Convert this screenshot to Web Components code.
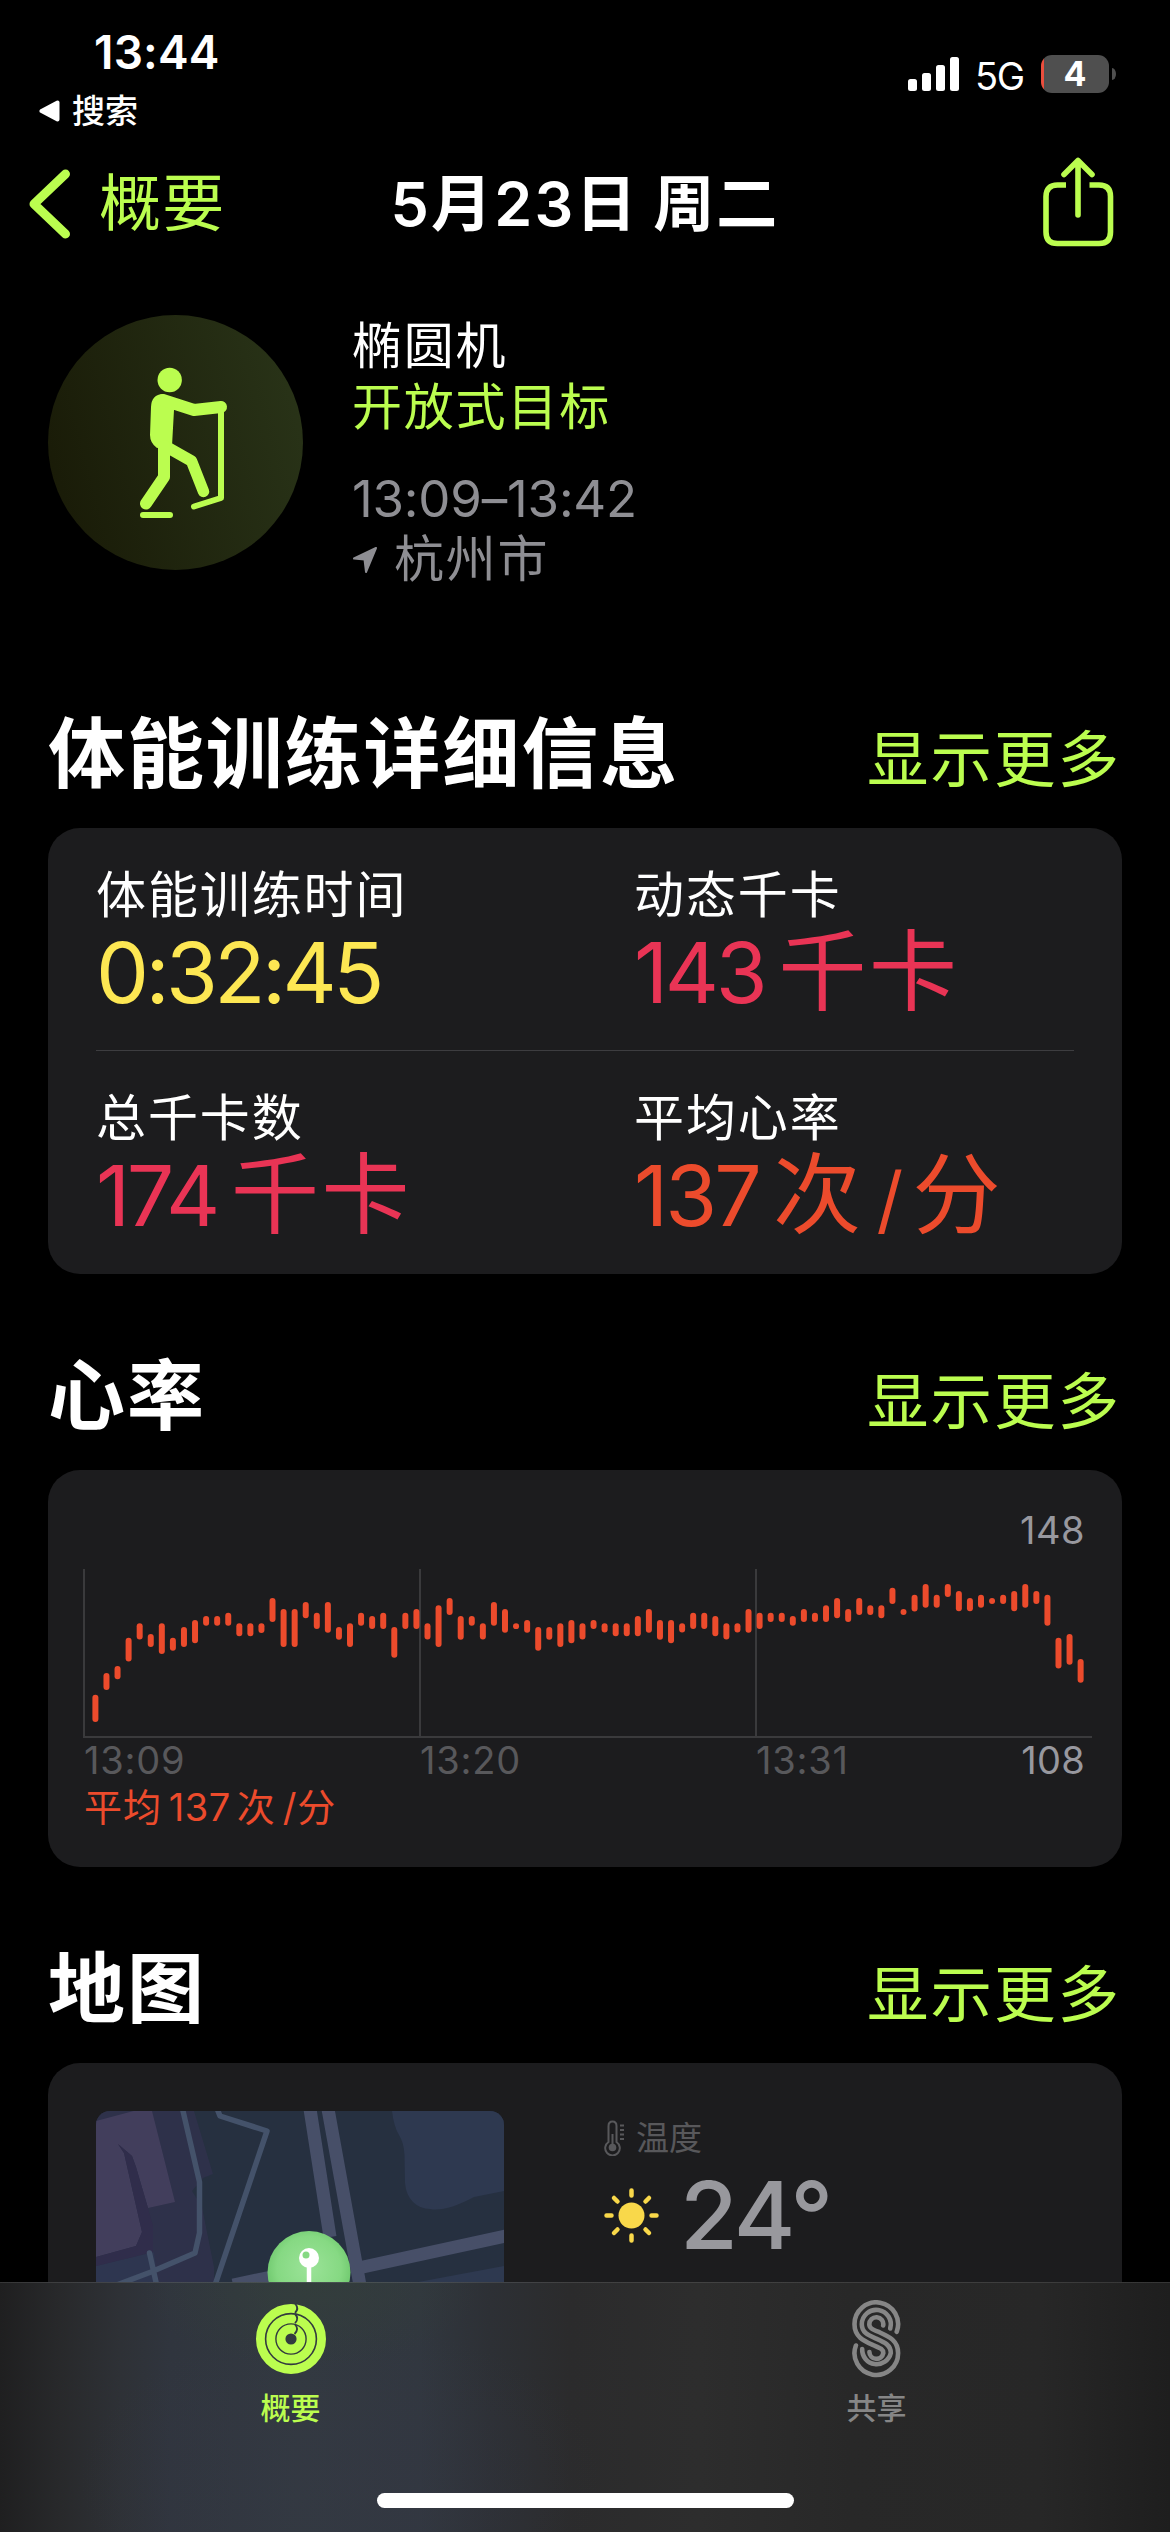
<!DOCTYPE html>
<html lang="zh-CN">
<head>
<meta charset="utf-8">
<title>5月23日 周二</title>
<style>
  html, body {
    margin: 0;
    background: #000;
  }
  body {
    width: 1170px;
    height: 2532px;
    overflow: hidden;
    color: #fff;
    font-family: Inter, "Noto Sans CJK SC", sans-serif;
    --lime: #bbfd4f;
    --card: #1c1c1e;
    --gray: #8e8e93;
    --dim: #58585b;
    --red: #e93455;
    --orange: #ec4b2c;
    --yellow: #fde753;
  }
</style>
</head>
<body>
<workout-page>
  <status-bar time="13:44" back="搜索" network="5G" battery="4"></status-bar>
  <nav-bar back="概要">5月23日 周二</nav-bar>
  <workout-summary>
    <span slot="name">椭圆机</span>
    <span slot="goal">开放式目标</span>
    <span slot="time">13:09–13:42</span>
    <span slot="place">杭州市</span>
  </workout-summary>

  <detail-section heading="体能训练详细信息">
    <metric-grid>
      <metric-cell label="体能训练时间" value="0:32:45" style="--tint: var(--yellow); --track: -3.6px"></metric-cell>
      <metric-cell label="动态千卡" value="143" unit="千卡" style="--tint: var(--red); --track: -3.3px"></metric-cell>
      <metric-cell label="总千卡数" value="174" unit="千卡" style="--tint: var(--red); --track: -3.4px"></metric-cell>
      <metric-cell label="平均心率" value="137" unit="次/分" style="--tint: var(--orange); --track: -2.9px"></metric-cell>
    </metric-grid>
  </detail-section>

  <detail-section heading="心率">
    <heart-chart max="148" min="108"></heart-chart>
  </detail-section>

  <detail-section heading="地图">
    <map-card>
      <route-map></route-map>
      <weather-info label="温度">24°</weather-info>
    </map-card>
  </detail-section>
</workout-page>

<tab-bar>
  <tab-item icon="rings" active>概要</tab-item>
  <tab-item icon="sharing">共享</tab-item>
</tab-bar>

<script>
(function () {
  function define(name, render) {
    window.customElements.define(name, class extends HTMLElement {
      constructor() {
        super();
        this.attachShadow({mode: 'open'});
      }

      connectedCallback() {
        const template = document.createElement('template');
        template.innerHTML = render(this);
        this.shadowRoot.replaceChildren(template.content.cloneNode(true));
      }
    });
  }

  const attr = (el, name) => el.getAttribute(name) || '';

  define('workout-page', () => `
    <style>
      :host { display: flex; flex-direction: column; width: 1170px; }
    </style>
    <slot></slot>
  `);

  define('status-bar', el => `
    <style>
      :host { display: flex; justify-content: space-between; height: 140px; }
      .left { padding: 32px 0 0 39px; }
      .time { padding-left: 55px; font: 600 46px/41px Inter, sans-serif; letter-spacing: .2px; }
      .back { display: flex; align-items: center; gap: 11px; margin-top: 18px; font-size: 33px; line-height: 40px; font-weight: 500; }
      .right { display: flex; align-items: center; height: 38px; padding: 55px 54px 0 0; }
      .net { margin: 0 17px 0 15px; font-size: 38px; line-height: 38px; letter-spacing: -1.2px; padding-top: 3px; }
      .battery { display: flex; align-items: center; justify-content: center; width: 68px; height: 38px; border-radius: 11px;
        background: linear-gradient(90deg, #ea4e3d 3px, #4f4f4f 3px); font-size: 34px; line-height: 38px; font-weight: 700; }
      .nub { width: 4px; height: 12px; margin-left: 3px; background: #4f4f4f; border-radius: 0 4px 4px 0 / 0 6px 6px 0; }
    </style>
    <div class="left">
      <div class="time">${attr(el, 'time')}</div>
      <div class="back">
        <svg width="22" height="22" viewBox="0 0 22 22"><path d="M2.500 11 18.500 2.500V19.500Z" fill="#fff" stroke="#fff" stroke-width="4" stroke-linejoin="round"/></svg>
        <span>${attr(el, 'back')}</span>
      </div>
    </div>
    <div class="right">
      <svg width="52" height="36" viewBox="0 0 52 36" fill="#fff">
        <rect x="0" y="23" width="9" height="12" rx="2.500"/>
        <rect x="14" y="17" width="9" height="18" rx="2.500"/>
        <rect x="28" y="9" width="9" height="26" rx="2.500"/>
        <rect x="42" y="1" width="9" height="34" rx="2.500"/>
      </svg>
      <span class="net">${attr(el, 'network')}</span>
      <span class="battery">${attr(el, 'battery')}</span>
      <span class="nub"></span>
    </div>
  `);

  define('nav-bar', el => `
    <style>
      :host { display: grid; grid-template-columns: 1fr auto 1fr; align-items: center; height: 126px; padding: 0 56px 0 28px; font-size: 61px; line-height: 126px; }
      .back { display: flex; align-items: center; gap: 28px; color: var(--lime); }
      .back span { font-size: 62px; letter-spacing: 1.200px; padding-top: 1px; }
      .title { padding-left: 28px; font-weight: 600; letter-spacing: 2.200px; word-spacing: -3px; }
      .share { justify-self: end; display: block; margin-bottom: 4px; }
    </style>
    <div class="back">
      <svg width="43" height="72" viewBox="0 0 43 72" fill="none" stroke="#bbfd4f" stroke-width="9" stroke-linecap="round" stroke-linejoin="round"><path d="M37.500 6 6 36 37.500 66"/></svg>
      <span>${attr(el, 'back')}</span>
    </div>
    <div class="title"><slot></slot></div>
    <svg class="share" width="72" height="92" viewBox="0 0 72 92" fill="none" stroke="#bbfd4f" stroke-width="5.600">
      <path d="M24 29H15.500Q4 29 4 40.500V76Q4 87.500 15.500 87.500H57Q68.500 87.500 68.500 76V40.500Q68.500 29 57 29H47.500"/>
      <path d="M36 5V59M22 18.500 36 4.500 50 18.500" stroke-linecap="round" stroke-linejoin="round"/>
    </svg>
  `);

  define('workout-summary', () => `
    <style>
      :host { display: flex; gap: 49px; height: 255px; padding: 49px 48px 138px; }
      .badge { flex: none; width: 255px; height: 255px; border-radius: 50%; background: linear-gradient(75deg, #181906, #2a3519); }
      .text { padding-top: 1px; font-size: 50px; line-height: 61px; letter-spacing: 1.800px; }
      .goal { color: var(--lime); }
      .time { margin-top: 30px; color: var(--gray); font-size: 51px; letter-spacing: -.2px; }
      .place { display: flex; align-items: center; gap: 16px; color: var(--gray); }
    </style>
    <svg class="badge" viewBox="48 315 255 255" fill="none" stroke="#bbfd4f" stroke-width="12" stroke-linecap="round" stroke-linejoin="round">
      <circle cx="169.700" cy="380" r="12.200" fill="#bbfd4f" stroke="none"/>
      <path d="M163 394Q151.500 394.500 151 407L150 435Q150 443 157 448L172 446 174 410 176 400Z" fill="#bbfd4f" stroke="none"/>
      <path d="M163 400 194 410 221 407"/>
      <path d="M165 446 191.500 461 203.500 491.500" stroke-width="11.500"/>
      <path d="M164 446V477L146 503.500"/>
      <path d="M221 407V498L194 506.500" stroke-width="6"/>
      <path d="M143 515H170" stroke-width="6"/>
    </svg>
    <div class="text">
      <div><slot name="name"></slot></div>
      <div class="goal"><slot name="goal"></slot></div>
      <div class="time"><slot name="time"></slot></div>
      <div class="place">
        <svg width="26" height="28" viewBox="0 0 26 28"><path d="M24 2 2 12.500 12.500 13.500 14 26Z" fill="#8e8e93" stroke="#8e8e93" stroke-width="2" stroke-linejoin="round"/></svg>
        <slot name="place"></slot>
      </div>
    </div>
  `);

  define('detail-section', el => `
    <style>
      :host { display: block; margin: 0 48px 76px; }
      header { display: flex; justify-content: space-between; height: 90px; margin-bottom: 30px; padding: 0 2px 0 0; line-height: 92px; }
      h2 { margin: 0; font-size: 77px; font-weight: 700; letter-spacing: 1.900px; }
      .more { padding-top: 6px; color: var(--lime); font-size: 61.500px; letter-spacing: 2px; margin-right: -1px; }
      .card { border-radius: 32px; background: var(--card); overflow: hidden; }
    </style>
    <header>
      <h2>${attr(el, 'heading')}</h2>
      <span class="more">显示更多</span>
    </header>
    <div class="card"><slot></slot></div>
  `);

  define('metric-grid', () => `
    <style>
      :host {
        display: grid; grid-template-columns: 538px 1fr; grid-auto-rows: 223px; padding: 0 48px;
        background: linear-gradient(#3d3d40, #3d3d40) 48px 222px / 978px 1px no-repeat;
      }
    </style>
    <slot></slot>
  `);

  // "/" sits between the two characters of a rate, slightly apart from them
  const unit = text => text.replace('/', '<i>/</i>');

  define('metric-cell', el => `
    <style>
      :host { display: block; padding-top: 41px; white-space: nowrap; }
      .label { font-size: 50px; line-height: 52px; letter-spacing: 1.900px; }
      .value { margin-top: 2px; color: var(--tint); font-size: 84px; line-height: 96px; letter-spacing: var(--track); }
      .unit { margin-left: 14px; font-size: 88px; letter-spacing: 2.500px; }
      i { font-style: normal; font-size: 74px; margin: 0 7px 0 13px; }
    </style>
    <div class="label">${attr(el, 'label')}</div>
    <div class="value">${attr(el, 'value')}<span class="unit">${unit(attr(el, 'unit'))}</span></div>
  `);

  // top and bottom of each sample, in thirds of a pixel
  const samples = [
    [584, 666], [519, 570], [498, 538], [413, 484], [370, 419], [402, 441], [370, 462], [413, 452], [381, 441],
    [360, 430], [348, 377], [348, 377], [338, 377], [370, 409], [370, 409], [370, 399], [294, 366], [327, 441],
    [327, 441], [306, 355], [338, 387], [306, 398], [381, 419], [370, 441], [338, 377], [348, 387], [338, 387],
    [381, 473], [338, 387], [327, 387], [370, 419], [316, 441], [294, 345], [348, 419], [348, 377], [370, 419],
    [306, 377], [327, 398], [370, 387], [360, 398], [381, 452], [381, 419], [370, 441], [360, 430], [370, 419],
    [360, 387], [370, 398], [370, 409], [370, 409], [348, 409], [327, 398], [360, 419], [360, 430], [370, 398],
    [338, 387], [338, 387], [348, 409], [370, 419], [370, 398], [327, 398], [338, 387], [338, 366], [338, 366],
    [348, 377], [327, 366], [338, 366], [316, 366], [294, 355], [327, 366], [294, 345], [316, 345], [316, 355],
    [263, 312], [327, 345], [284, 334], [252, 323], [284, 323], [252, 291], [273, 334], [294, 334], [284, 323],
    [294, 312], [284, 312], [273, 334], [252, 323], [273, 312], [284, 377], [413, 505], [402, 494], [477, 548]
  ];

  const bars = samples.map(([top, bottom], i) => {
    const x = 12.4 + i * 11.07 - 3;
    return `<rect x="${x.toFixed(2)}" y="${((top - 207) / 3).toFixed(1)}" width="6" height="${((bottom - top) / 3).toFixed(1)}" rx="3"/>`;
  }).join('');

  define('heart-chart', el => `
    <style>
      :host { display: block; height: 357px; padding: 40px 30px 0 35px; font-size: 38px; line-height: 40px; }
      .max { padding-right: 7px; text-align: right; color: #98989f; letter-spacing: .5px; }
      svg { display: block; margin-top: 19px; }
      .axis { display: grid; grid-template-columns: 336px 336px 1fr auto; padding: 2px 7px 0 1px; color: var(--dim); letter-spacing: .8px; }
      .min { color: #98989f; letter-spacing: .3px; }
      .avg { padding-left: 1px; margin-top: 7px; color: var(--orange); font-size: 38px; letter-spacing: .9px; }
      .avg b { font-weight: 400; margin: 0 6px 0 7px; letter-spacing: .5px; }
      .avg i { font-style: normal; margin: 0 0 0 7px; }
    </style>
    <div class="max">${attr(el, 'max')}</div>
    <svg width="1009" height="169" viewBox="0 0 1009 169">
      <path d="M1 0V169M337 0V169M673 0V169M0 168H1009" stroke="#3a3a3c" stroke-width="2"/>
      <g fill="#ec4b2c">${bars}</g>
    </svg>
    <div class="axis">
      <span>13:09</span><span>13:20</span><span>13:31</span><span class="min">${attr(el, 'min')}</span>
    </div>
    <div class="avg">平均<b>137</b>次<i>/</i>分</div>
  `);

  define('map-card', () => `
    <style>
      :host { display: flex; gap: 100px; height: 408px; padding: 48px; }
    </style>
    <slot></slot>
  `);

  define('route-map', () => `
    <style>
      :host { display: block; width: 408px; height: 408px; border-radius: 14px; overflow: hidden; }
    </style>
    <svg width="408" height="408" viewBox="0 0 408 408" fill="none">
      <defs>
        <radialGradient id="pin" cx=".5" cy=".45" r=".55">
          <stop offset="0" stop-color="#9be398"/>
          <stop offset=".7" stop-color="#86d983"/>
          <stop offset="1" stop-color="#6cc66b"/>
        </radialGradient>
      </defs>
      <rect width="408" height="408" fill="#263040"/>
      <path d="M0 0H98L117 63 107 67 96 80 106 96 118 156 120 408H0Z" fill="#2e314a"/>
      <path d="M0 155 58 141 62 172 0 200Z" fill="#2e3650"/>
      <path d="M0 10 37.500 0H56L79 91 52 97 40 56 36 45 22 33 28 42 46 121 40 135 0 146Z" fill="#423e5c"/>
      <path d="M22 33 36 45 40 56 52 97 57 115 57 141 0 155V146L40 135 46 121 28 42Z" fill="#302d4b"/>
      <path d="M296 0Q298 16 303 24T308.500 44L309 72Q310 84 317 91T334 98Q350 101 378 86L408 80V0Z" fill="#2e3950"/>
      <path d="M317 172 408 155V408H317Z" fill="#2e3950"/>
      <path d="M87 0 103.500 71V122L99 142 55 161 10 178M53.500 142 62 180M122 0 124 5 171 20 117 180" stroke="#44526a" stroke-width="5.500" stroke-linejoin="round" stroke-linecap="round"/>
      <path d="M214 -2 234 126M232 -2 265 180M267 156 410 125M137 174 190 163" stroke="#474f68" stroke-width="13"/>
      <circle cx="213" cy="161.500" r="41.500" fill="url(#pin)"/>
      <path d="M213 147V190" stroke="#fff" stroke-width="4.500"/>
      <circle cx="213" cy="147" r="10" fill="#fff"/>
      <circle cx="210" cy="144" r="3.500" fill="#86d983"/>
    </svg>
  `);

  define('weather-info', el => `
    <style>
      :host { display: block; padding-top: 9px; }
      .label { display: flex; align-items: center; gap: 10px; color: var(--dim); font-size: 33px; line-height: 33px; }
      .temp { display: flex; align-items: center; gap: 21px; margin-top: 4px; color: #98989d; font-size: 94px; line-height: 110px; font-weight: 500; letter-spacing: -2.800px; }
    </style>
    <div class="label">
      <svg width="22" height="36" viewBox="0 0 22 36" fill="none" stroke="#58585b" stroke-width="2">
        <path d="M4.500 22V6Q4.500 1.500 8.500 1.500T12.500 6V22A7.300 7.300 0 1 1 4.500 22Z"/>
        <circle cx="8.500" cy="27.500" r="3.800" fill="#58585b" stroke="none"/>
        <path d="M8.500 14V26M16 5.500H20M16 10H20M16 14.500H20M16 19H20"/>
      </svg>
      <span>${attr(el, 'label')}</span>
    </div>
    <div class="temp">
      <svg width="55" height="55" viewBox="-27.500 -27.500 55 55">
        <circle r="13" fill="#f9d84a"/>
        <path d="M0-25V-20M0 25V20M-25 0H-20M25 0H20M-17.500-17.500-14-14M17.500-17.500 14-14M-17.500 17.500-14 14M17.500 17.500 14 14" stroke="#f9d84a" stroke-width="4.500" stroke-linecap="round"/>
      </svg>
      <slot></slot>
    </div>
  `);

  define('tab-bar', () => `
    <style>
      :host {
        position: absolute; left: 0; top: 2282px; width: 1170px; height: 250px;
        display: grid; grid-template: 211px 1fr / 1fr 1fr; justify-items: center;
        background:
          linear-gradient(rgba(255, 255, 255, .1), rgba(255, 255, 255, .1)) 0 0 / 100% 1px no-repeat,
          radial-gradient(170px 80px at 310px 5px, rgba(52, 66, 56, .5), transparent),
          radial-gradient(260px 160px at 340px 200px, rgba(54, 56, 70, .4), transparent),
          linear-gradient(90deg, #1f1f20, #28292b 60px, #2e3136 120px, #30353e 170px, #323940 300px, #31373f 420px, #2d3035 490px, #2b2b2c 570px, #2d2d2d 700px, #282828 850px, #272727 1040px, #1e1e1e);
      }
      .home { grid-column: 1 / 3; width: 417px; height: 15px; border-radius: 8px; background: #fff; }
    </style>
    <slot></slot>
    <div class="home"></div>
  `);

  const icons = {
    rings: `
      <svg width="72" height="78" viewBox="-36 -39 72 78" fill="none">
        <g stroke="#bbfd4f" stroke-width="8.800">
          <circle r="30.600"/><circle r="20.200"/><circle r="10"/>
        </g>
        <path d="M4-35.500Q8.500-30.500 4-26M4-25Q8.500-20.500 4-15.800M4-14.600Q8.500-10 3.500-5" stroke="#323a41" stroke-width="1.800"/>
      </svg>`,
    sharing: `
      <svg width="49" height="78" viewBox="0 0 49 78" fill="none" stroke="#868686" stroke-width="4.600" stroke-linecap="round">
        <path d="M44.700 31.800A21.800 21.800 0 1 0 2.500 24.300C2.500 37 12 41 21.300 45.200C28 48 31.300 49 31.300 53A7 7 0 0 1 17.400 52"/>
        <path d="M38.200 28.500A14.500 14.500 0 1 0 9.800 24.300C9.800 32.500 16 35 24.300 38.700S38.800 45 38.800 53A14.500 14.500 0 0 1 10.200 49"/>
        <path d="M31.200 25.400A7 7 0 1 0 17.300 24.300C17.300 28.300 20.600 29.400 27.300 32.200C36.600 36.400 46.100 40.400 46.100 53A21.800 21.800 0 1 1 3.900 45.500"/>
      </svg>`
  };

  define('tab-item', el => `
    <style>
      :host { display: flex; flex-direction: column; align-items: center; padding: 18px 2px 0 0; color: #868686; font-size: 30px; line-height: 36px; font-weight: 500; }
      :host([active]) { padding-right: 4px; color: var(--lime); }
      svg { display: block; margin-bottom: 12px; }
    </style>
    ${icons[attr(el, 'icon')]}
    <slot></slot>
  `);
})();
</script>
</body>
</html>
